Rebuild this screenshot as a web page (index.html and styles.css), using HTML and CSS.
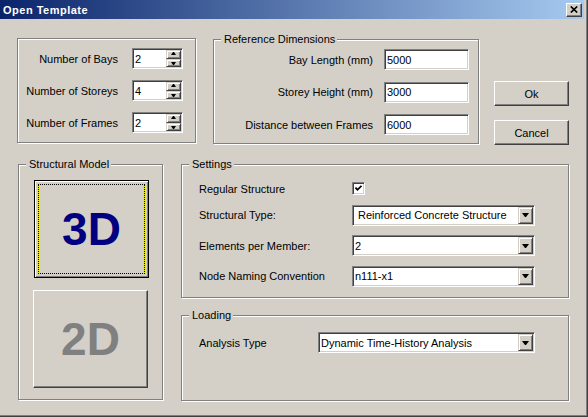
FILE: index.html
```html
<!DOCTYPE html>
<html>
<head>
<meta charset="utf-8">
<title>Open Template</title>
<link rel="stylesheet" href="styles.css">
</head>
<body>
<div class="window">
  <div class="titlebar">
    <span class="title">Open Template</span>
    <div class="close">
      <svg width="8" height="7" viewBox="0 0 8 7"><path d="M0.8 0.5 L7.2 6.5 M7.2 0.5 L0.8 6.5" stroke="#000" stroke-width="1.7" fill="none"/></svg>
    </div>
  </div>
  <div class="client">
    <div class="row-top">
      <div class="group g-counts">
        <div class="form counts">
          <label>Number of Bays</label>
          <div class="spin"><span class="val">2</span><div class="spin-btns"><span class="sb up"></span><span class="sb down"></span></div></div>
          <label>Number of Storeys</label>
          <div class="spin"><span class="val">4</span><div class="spin-btns"><span class="sb up"></span><span class="sb down"></span></div></div>
          <label>Number of Frames</label>
          <div class="spin"><span class="val">2</span><div class="spin-btns"><span class="sb up"></span><span class="sb down"></span></div></div>
        </div>
      </div>
      <div class="group g-dims">
        <span class="legend">Reference Dimensions</span>
        <div class="form dims">
          <label>Bay Length (mm)</label><div class="edit">5000</div>
          <label>Storey Height (mm)</label><div class="edit">3000</div>
          <label>Distance between Frames</label><div class="edit">6000</div>
        </div>
      </div>
      <div class="buttons">
        <div class="btn">Ok</div>
        <div class="btn">Cancel</div>
      </div>
    </div>
    <div class="row-bottom">
      <div class="group g-model">
        <span class="legend">Structural Model</span>
        <div class="bigbtn b3d"><span>3D</span></div>
        <div class="bigbtn b2d"><span>2D</span></div>
      </div>
      <div class="col-right">
        <div class="group g-settings">
          <span class="legend">Settings</span>
          <div class="form settings">
            <label>Regular Structure</label>
            <div class="checkcell"><div class="check"><svg width="7" height="7" viewBox="0 0 7 7"><path d="M0.5 2.6 L2.5 4.8 L6.5 0.8" stroke="#000" stroke-width="1.8" fill="none"/></svg></div></div>
            <label>Structural Type:</label>
            <div class="combo list"><span class="ctext">Reinforced Concrete Structure</span><span class="cbtn"></span></div>
            <label>Elements per Member:</label>
            <div class="combo"><span class="ctext">2</span><span class="cbtn"></span></div>
            <label>Node Naming Convention</label>
            <div class="combo"><span class="ctext">n111-x1</span><span class="cbtn"></span></div>
          </div>
        </div>
        <div class="group g-loading">
          <span class="legend">Loading</span>
          <div class="form loading">
            <label>Analysis Type</label>
            <div class="combo"><span class="ctext">Dynamic Time-History Analysis</span><span class="cbtn"></span></div>
          </div>
        </div>
      </div>
    </div>
  </div>
</div>
</body>
</html>
```
FILE: styles.css
```css
* { box-sizing: border-box; }
html, body { margin: 0; padding: 0; }
body {
  width: 588px;
  height: 417px;
  overflow: hidden;
  background: #D4D0C8;
  font-family: "Liberation Sans", Arial, sans-serif;
  font-size: 11px;
  color: #000;
}
.window {
  width: 588px;
  height: 417px;
  background: #D4D0C8;
  box-shadow: inset -1px -1px 0 #404040, inset -2px -2px 0 #808080;
}
.titlebar {
  width: 584px;
  height: 19px;
  display: flex;
  align-items: center;
  padding-left: 3px;
  background: linear-gradient(to right, #0A246A, #A6CAF0);
}
.title {
  color: #fff;
  font-weight: bold;
  font-size: 11px;
  letter-spacing: 0.5px;
}
.close {
  margin-left: auto;
  margin-right: 2px;
  width: 16px;
  height: 14px;
  display: flex;
  align-items: center;
  justify-content: center;
  background: #D4D0C8;
  border: 1px solid;
  border-color: #fff #404040 #404040 #fff;
  box-shadow: inset -1px -1px 0 #808080;
}
.client { display: flex; flex-direction: column; }

.row-top {
  display: flex;
  align-items: flex-start;
  margin-top: 19px;
  padding-left: 17px;
}
.group {
  position: relative;
  border: 1px solid #808080;
  box-shadow: 1px 1px 0 #fff, inset 1px 1px 0 #fff;
}
.legend {
  position: absolute;
  top: -7px;
  left: 7px;
  padding: 0 2px 0 3px;
  line-height: 13px;
  background: #D4D0C8;
  white-space: nowrap;
}
.g-counts { width: 179px; height: 105px; }
.g-dims { width: 266px; height: 105px; margin-left: 17px; margin-top: 1px; }

.form {
  display: grid;
  align-items: center;
}
.form label { white-space: nowrap; }
.counts {
  grid-template-columns: 100px 51px;
  column-gap: 14px;
  row-gap: 11px;
  padding-top: 9px;
}
.counts label, .dims label { text-align: right; }
.dims {
  grid-template-columns: 159px 85px;
  column-gap: 11px;
  row-gap: 11.5px;
  padding-top: 9px;
}

.sunken {
  border: 1px solid;
}
.spin, .edit, .combo, .check {
  background: #fff;
  border: 1px solid;
  border-color: #808080 #fff #fff #808080;
  box-shadow: inset 1px 1px 0 #404040, inset -1px -1px 0 #D4D0C8;
}
.spin {
  height: 21px;
  display: flex;
  align-items: stretch;
  padding: 1px;
}
.spin .val {
  flex: 1;
  display: flex;
  align-items: center;
  padding-left: 1px;
}
.spin-btns {
  width: 15px;
  display: flex;
  flex-direction: column;
}
.sb, .cbtn {
  position: relative;
  background: #D4D0C8;
  border: 1px solid;
  border-color: #D4D0C8 #404040 #404040 #D4D0C8;
  box-shadow: inset 1px 1px 0 #fff, inset -1px -1px 0 #808080;
}
.sb { flex: 1; }
.sb::after {
  content: "";
  position: absolute;
  left: 50%;
  top: 50%;
  width: 1px;
  height: 0;
  margin-left: -2.5px;
  border-left: 2px solid transparent;
  border-right: 2px solid transparent;
}
.sb.up::after { border-bottom: 3px solid #000; margin-top: -2px; }
.sb.down::after { border-top: 3px solid #000; margin-top: -1px; }

.edit {
  height: 21px;
  display: flex;
  align-items: center;
  padding-left: 2px;
}

.buttons {
  display: flex;
  flex-direction: column;
  gap: 14px;
  margin-left: 15px;
  margin-top: 43px;
}
.btn {
  width: 75px;
  height: 25px;
  display: flex;
  align-items: center;
  justify-content: center;
  background: #D4D0C8;
  border: 1px solid;
  border-color: #fff #404040 #404040 #fff;
  box-shadow: inset -1px -1px 0 #808080;
}

.row-bottom {
  display: flex;
  align-items: flex-start;
  margin-top: 19px;
  padding-left: 18px;
}
.g-model { width: 145px; height: 236px; }
.bigbtn {
  position: relative;
  width: 115px;
  height: 98px;
  display: flex;
  align-items: center;
  justify-content: center;
  background: #D4D0C8;
  font-family: "Liberation Sans", Arial, sans-serif;
  font-weight: bold;
  font-size: 46px;
  line-height: 1;
}
.b3d {
  margin: 15px 0 0 15px;
  color: #000080;
  border: 1px solid #000;
  box-shadow: inset 1px 1px 0 #fff, inset -1px -1px 0 #808080;
}
.b3d::before, .b3d::after {
  content: "";
  position: absolute;
  inset: 3px;
}
.b3d::before { border: 1px solid #E8E800; }
.b3d::after { border: 1px dotted #000; }
.b2d {
  margin: 12px 0 0 14px;
  color: #808080;
  border: 1px solid;
  border-color: #fff #404040 #404040 #fff;
  box-shadow: inset -1px -1px 0 #808080;
}

.col-right {
  display: flex;
  flex-direction: column;
  gap: 17px;
  margin-left: 18px;
}
.g-settings { width: 388px; height: 134px; }
.g-loading { width: 388px; height: 86px; }

.settings {
  grid-template-columns: 153px 183px;
  row-gap: 9.5px;
  padding: 17px 0 0 17px;
}
.checkcell { display: flex; }
.check {
  width: 13px;
  height: 13px;
  display: flex;
  align-items: center;
  justify-content: center;
}
.combo {
  height: 21px;
  display: flex;
  align-items: stretch;
  padding: 1px;
}
.ctext {
  flex: 1;
  display: flex;
  align-items: center;
  padding-left: 1px;
  white-space: nowrap;
}
.combo.list .ctext { padding-left: 4px; }
.cbtn {
  width: 15px;
}
.cbtn::after {
  content: "";
  position: absolute;
  left: 50%;
  top: 50%;
  width: 1px;
  height: 0;
  margin-left: -3.5px;
  margin-top: -2px;
  border-left: 3px solid transparent;
  border-right: 3px solid transparent;
  border-top: 4px solid #000;
}
.loading {
  grid-template-columns: 119px 217px;
  padding: 16px 0 0 17px;
}
```
